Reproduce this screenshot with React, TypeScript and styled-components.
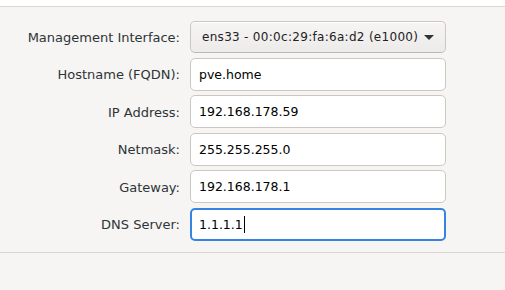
import React from "react";
import styled, { createGlobalStyle } from "styled-components";

const Global = createGlobalStyle`
  html, body { margin: 0; padding: 0; background: #f6f5f4; }
  body { font-family: "DejaVu Sans", "Liberation Sans", sans-serif; }
`;

const Page = styled.div`
  width: 505px;
  height: 290px;
  display: flex;
  flex-direction: column;
  background: #f6f5f4;
  overflow: hidden;
`;

const TopBar = styled.div`
  height: 6px;
  background: #ffffff;
  border-bottom: 1px solid #dcd8d4;
  flex: none;
`;

const Form = styled.div`
  display: grid;
  grid-template-columns: 180px 256px;
  column-gap: 10px;
  row-gap: 4.5px;
  padding: 14px 0 0 0;
  height: 231px;
  box-sizing: border-box;
  align-content: start;
  grid-auto-rows: 33px;
  grid-template-rows: 32px;
`;

const Label = styled.label`
  display: flex;
  align-items: center;
  justify-content: flex-end;
  font-size: 13px;
  color: #2e3436;
  padding-top: 1px;
`;

const Combo = styled.button`
  display: flex;
  align-items: center;
  justify-content: space-between;
  white-space: nowrap;
  height: 32px;
  margin-bottom: 0.5px;
  padding: 0 11px 0 11px;
  border: 1px solid #cdc7c2;
  border-bottom-color: #bfb8b1;
  border-radius: 5px;
  background: linear-gradient(#f6f5f4, #edebe9);
  box-shadow: inset 0 1px #ffffff;
  font-family: "DejaVu Sans", sans-serif;
  font-size: 12px;
  letter-spacing: 0.3px;
  color: #1e2224;
  box-sizing: border-box;
`;

const Arrow = styled.span`
  width: 0;
  height: 0;
  border-left: 5px solid transparent;
  border-right: 5px solid transparent;
  border-top: 5px solid #2e3436;
  margin-left: 6px;
`;

const Entry = styled.div<{ $focus?: boolean }>`
  display: flex;
  align-items: center;
  box-sizing: border-box;
  height: 33px;
  padding: 0 ${(p) => (p.$focus ? "7px" : "8px")};
  background: #ffffff;
  border: ${(p) => (p.$focus ? "2px solid #3584e4" : "1px solid #cdc7c2")};
  border-radius: 5px;
  font-size: 12.5px;
  color: #000000;
`;

const Caret = styled.span`
  display: inline-block;
  width: 1px;
  height: 17px;
  background: #000;
  margin-left: 1px;
`;

const Divider = styled.div`
  border-top: 1px solid #dad6d2;
  margin-top: 14px;
`;

const rows: [string, string][] = [
  ["Hostname (FQDN):", "pve.home"],
  ["IP Address:", "192.168.178.59"],
  ["Netmask:", "255.255.255.0"],
  ["Gateway:", "192.168.178.1"],
];

export default function App() {
  return (
    <Page>
      <Global />
      <TopBar />
      <Form>
        <Label>Management Interface:</Label>
        <Combo>
          <span>ens33 - 00:0c:29:fa:6a:d2 (e1000)</span>
          <Arrow />
        </Combo>
        {rows.map(([l, v]) => (
          <React.Fragment key={l}>
            <Label>{l}</Label>
            <Entry>{v}</Entry>
          </React.Fragment>
        ))}
        <Label>DNS Server:</Label>
        <Entry $focus>
          1.1.1.1
          <Caret />
        </Entry>
      </Form>
      <Divider />
    </Page>
  );
}
